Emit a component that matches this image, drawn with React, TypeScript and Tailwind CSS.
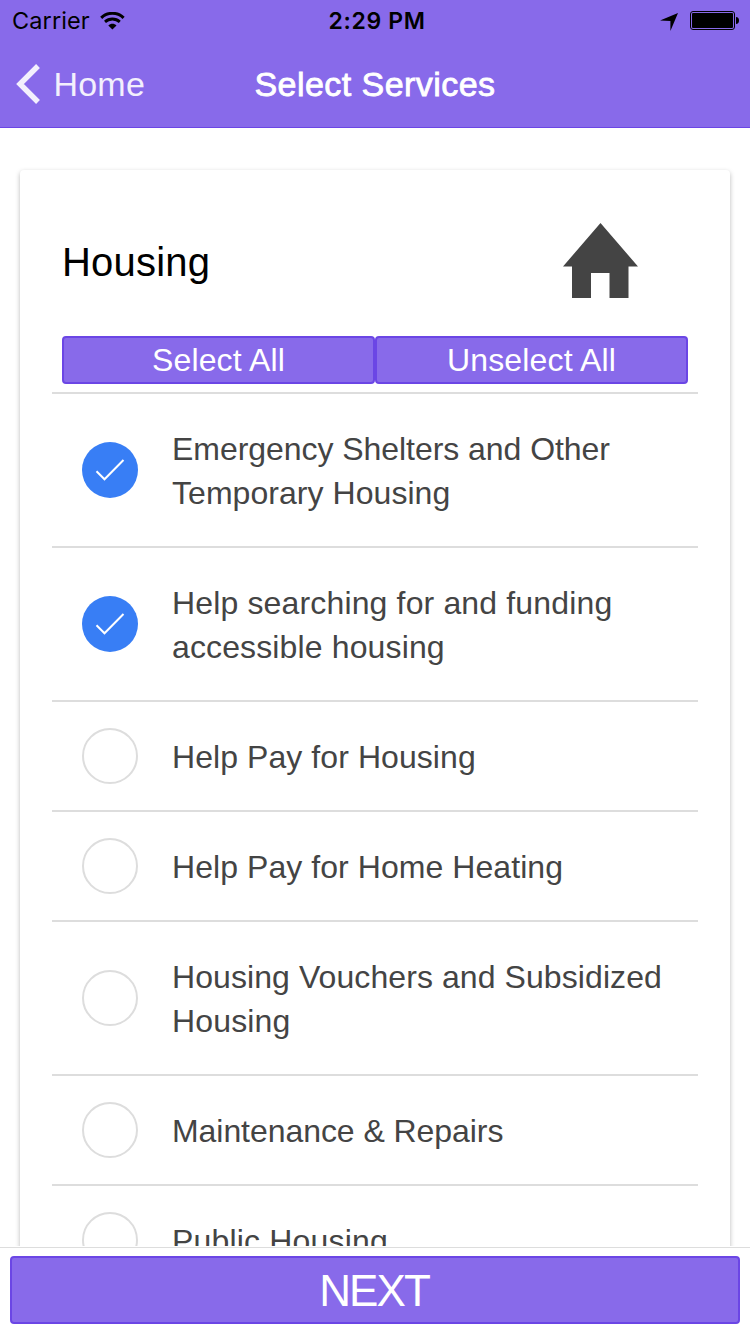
import { useState } from "react";

type Line = { text: string; tracking: string };
type Service = { lines: Line[]; selected: boolean };

const initialServices: Service[] = [
  {
    lines: [
      { text: "Emergency Shelters and Other", tracking: "tracking-[-0.05px]" },
      { text: "Temporary Housing", tracking: "tracking-[0.05px]" },
    ],
    selected: true,
  },
  {
    lines: [
      { text: "Help searching for and funding", tracking: "tracking-[0.15px]" },
      { text: "accessible housing", tracking: "tracking-[0.13px]" },
    ],
    selected: true,
  },
  { lines: [{ text: "Help Pay for Housing", tracking: "tracking-[0.07px]" }], selected: false },
  { lines: [{ text: "Help Pay for Home Heating", tracking: "tracking-[0.06px]" }], selected: false },
  {
    lines: [
      { text: "Housing Vouchers and Subsidized", tracking: "tracking-[0.08px]" },
      { text: "Housing", tracking: "tracking-[0.15px]" },
    ],
    selected: false,
  },
  { lines: [{ text: "Maintenance & Repairs", tracking: "tracking-[-0.06px]" }], selected: false },
  { lines: [{ text: "Public Housing", tracking: "tracking-[0.18px]" }], selected: false },
];

function StatusBar() {
  return (
    <div className="flex h-10 items-center pt-px text-black font-[Inter,sans-serif]">
      <div className="flex flex-1 items-center pl-3">
        <span className="text-[23.5px] leading-[39px] tracking-[0.1px]">Carrier</span>
        <svg className="ml-[10px] h-[18px] w-[25px]" viewBox="0 0 25 18" fill="none" stroke="#000">
          <path d="M1.2 5.8C7.4-.2 17.4-.2 23.6 5.8" strokeWidth="3" />
          <path d="M5 9.9C9.2 6 15.6 6 19.8 9.9" strokeWidth="2.8" />
          <path d="M8.3 13.4c2.3-2.3 6-2.3 8.2 0L12.4 17.6z" fill="#000" stroke="none" />
        </svg>
      </div>
      <span className="pl-[3px] pt-0.5 text-[23px] font-semibold leading-[39px] tracking-[0.65px]">2:29 PM</span>
      <div className="flex flex-1 items-center justify-end pr-[11px]">
        <svg className="mt-[3px] h-[18px] w-[18px]" viewBox="0 0 18 18">
          <path d="M18 0 10.4 18V8L0 7.6z" />
        </svg>
        <svg className="ml-3 h-[19px] w-[49px]" viewBox="0 0 49 19">
          <rect x=".5" y=".5" width="44" height="18" rx="2.5" fill="none" stroke="#000" />
          <rect x="2" y="2" width="41" height="15" rx="1" />
          <path d="M46 6c2 0 3 1.5 3 3.5S48 13 46 13z" />
        </svg>
      </div>
    </div>
  );
}

function Header() {
  return (
    <header className="h-32 shrink-0 border-b border-[#6b46e5] bg-[#886aea]">
      <StatusBar />
      <div className="grid h-[88px] grid-cols-[1fr_auto_1fr] items-center">
        <button className="flex items-center pl-4 text-[#f3f0fd]">
          <svg className="h-10 w-6" viewBox="0 0 24 40" fill="none" stroke="currentColor" strokeWidth="5.4">
            <path d="M22 2 4 20l18 18" />
          </svg>
          <span className="ml-[13.5px] text-[34px] leading-[44px] tracking-[0.2px]">Home</span>
        </button>
        <h1 className="text-[34px] leading-[44px] tracking-[0.45px] text-white [-webkit-text-stroke:0.8px_white]">
          Select Services
        </h1>
      </div>
    </header>
  );
}

function Check({ selected }: { selected: boolean }) {
  return selected ? (
    <span className="flex size-14 shrink-0 items-center justify-center rounded-full bg-[#387ef5]">
      <svg className="size-14" viewBox="0 0 56 56" fill="none" stroke="#fff" strokeWidth="2">
        <path d="m14.5 29.3 8 8L41.5 18" />
      </svg>
    </span>
  ) : (
    <span className="size-14 shrink-0 rounded-full border-2 border-[#ddd]" />
  );
}

export default function App() {
  const [services, setServices] = useState(initialServices);
  const setAll = (selected: boolean) => setServices((s) => s.map((x) => ({ ...x, selected })));
  const toggle = (i: number) =>
    setServices((s) => s.map((x, n) => (n === i ? { ...x, selected: !x.selected } : x)));

  return (
    <div className="flex h-[1334px] w-[750px] flex-col overflow-hidden bg-white font-['Liberation_Sans',Arial,sans-serif]">
      <Header />
      <main className="min-h-0 flex-1 overflow-hidden px-5 pt-[42px]">
        <section className="h-[1300px] rounded-[4px] bg-white px-8 shadow-[0_2px_5px_rgba(0,0,0,0.28)]">
          <div className="flex h-[166px] items-start justify-between pl-[10px] pr-[60px]">
            <h2 className="pt-[66px] text-[40px] leading-[52px] tracking-[0.2px] text-black">Housing</h2>
            <svg className="mt-[53px] h-[75px] w-[75px]" viewBox="0 0 75 75" fill="#444">
              <path d="M37.5 0 75 43.5h-9.5V75h-19V50H28v25H9V43.5H0z" />
            </svg>
          </div>
          <div className="flex h-14 px-[10px] pb-2 text-[32px] leading-[44px] tracking-[0.15px] text-white">
            <button onClick={() => setAll(true)} className="h-12 flex-1 rounded-[4px] border-2 border-[#6b46e5] bg-[#886aea]">
              Select All
            </button>
            <button onClick={() => setAll(false)} className="h-12 flex-1 rounded-[4px] border-2 border-[#6b46e5] bg-[#886aea]">
              Unselect All
            </button>
          </div>
          <ul>
            {services.map((s, i) => (
              <li
                key={s.lines[0].text}
                onClick={() => toggle(i)}
                className="flex items-center border-t-2 border-[#ddd] py-[26px] pl-[30px]"
              >
                <Check selected={s.selected} />
                <div className={s.lines.length > 1 ? "ml-[34px] py-[6px]" : "ml-[34px]"}>
                  {s.lines.map((line) => (
                    <div
                      key={line.text}
                      className={`relative top-px h-11 whitespace-nowrap text-[32px] leading-[44px] text-[#444] ${line.tracking}`}
                    >
                      {line.text}
                    </div>
                  ))}
                </div>
              </li>
            ))}
          </ul>
        </section>
      </main>
      <footer className="h-[88px] shrink-0 bg-white">
        <div className="mt-px h-px bg-[#ddd]" />
        <div className="px-[10px] pt-2">
          <button className="h-[68px] w-full rounded-[4px] border-2 border-[#6b46e5] bg-[#886aea] pr-0.5 pt-0.5 text-[44px] leading-[62px] tracking-[-1.9px] text-white">
            NEXT
          </button>
        </div>
      </footer>
    </div>
  );
}
